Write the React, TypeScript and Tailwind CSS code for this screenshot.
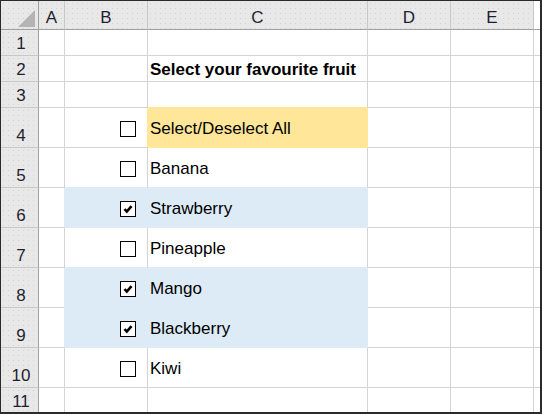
import { useState } from "react";

const COLS = ["A", "B", "C", "D", "E", ""];
const ROW_H = [26, 26, 26, 40, 40, 40, 40, 40, 40, 40, 26];

const YELLOW = "#ffe699";
const BLUE = "#ddebf7";
const GRID = "#d4d4d4";

const fruits = ["Banana", "Strawberry", "Pineapple", "Mango", "Blackberry", "Kiwi"];

const dots =
  "bg-[#e8e8e8] bg-[radial-gradient(circle,#d2d2d2_0.5px,transparent_0.7px)] bg-[length:5px_5px]";

function Box({ checked, onClick }: { checked: boolean; onClick: () => void }) {
  return (
    <button
      onClick={onClick}
      className="w-4 h-4 border border-black bg-white flex items-center justify-center"
    >
      {checked && (
        <svg width="14" height="14" viewBox="0 0 14 14">
          <path d="M3.5 7 L5.8 9.6 L10.5 4.2" fill="none" stroke="#000" strokeWidth="2.6" />
        </svg>
      )}
    </button>
  );
}

export default function App() {
  const [checked, setChecked] = useState([false, true, false, true, true, false]);
  const [all, setAll] = useState(false);

  const toggleAll = () => {
    const next = !all;
    setAll(next);
    setChecked(fruits.map(() => next));
  };

  const toggle = (i: number) => {
    setChecked(checked.map((v, j) => (j === i ? !v : v)));
  };

  // r: 1-based sheet row, c: 0 = A
  const fill = (r: number, c: number) => {
    if (r === 4 && c === 2) return YELLOW;
    if (r >= 5 && r <= 10 && (c === 1 || c === 2) && checked[r - 5]) return BLUE;
    return "";
  };

  const cellContent = (r: number, c: number) => {
    if (r === 2 && c === 2) return <span className="font-bold">Select your favourite fruit</span>;
    if (r === 4 && c === 1) return <Box checked={all} onClick={toggleAll} />;
    if (r === 4 && c === 2) return <span>Select/Deselect All</span>;
    if (r >= 5 && r <= 10) {
      const i = r - 5;
      if (c === 1) return <Box checked={checked[i]} onClick={() => toggle(i)} />;
      if (c === 2) return <span>{fruits[i]}</span>;
    }
    return null;
  };

  return (
    <div className="w-[542px] h-[414px] overflow-hidden bg-white border-l border-t border-r-2 border-b-2 border-[#2b2b2b] font-['Liberation_Sans',Arial,sans-serif] text-[17px] leading-[20px] text-black">
      <div className="grid grid-cols-[38px_26px_83px_220px_83px_83px_20px] grid-rows-[29px_26px_26px_26px_40px_40px_40px_40px_40px_40px_40px_26px]">
        {/* corner */}
        <div className={`${dots} border-r border-b border-[#a0a0a0] flex items-end justify-end pr-[3px] pb-[2px]`}>
          <svg width="17" height="17" viewBox="0 0 17 17">
            <polygon points="0,17 17,0 17,17" fill="#b4b4b4" />
          </svg>
        </div>
        {/* column headers */}
        {COLS.map((col, c) =>
          col ? (
            <div
              key={col}
              className={`${dots} border-r border-b border-r-[#c8c8c8] border-b-[#a0a0a0] flex items-end justify-center pb-[1.5px] text-[#1f1f2f]`}
            >
              {col}
            </div>
          ) : (
            <div key={c} className="bg-white border-b border-[#a0a0a0]" />
          )
        )}

        {ROW_H.map((_, idx) => {
          const r = idx + 1;
          return [
            <div
              key={`h${r}`}
              className={`${dots} border-r border-b border-r-[#a0a0a0] border-b-[#c8c8c8] flex items-end justify-center pl-[3px] pb-[1.5px] text-[#1f1f2f]`}
            >
              {r}
            </div>,
            ...COLS.map((_, c) => {
              const f = fill(r, c);
              const right = c === COLS.length - 1 ? "transparent" : f || fill(r, c + 1) || GRID;
              const bottom = f || fill(r + 1, c) || GRID;
              return (
                <div
                  key={`${r}-${c}`}
                  className={`border-r border-b flex items-center pt-[2px] ${
                    c === 1 ? "justify-end pr-[11px]" : "pl-[2px]"
                  }`}
                  style={{ backgroundColor: f || "#ffffff", borderRightColor: right, borderBottomColor: bottom }}
                >
                  {cellContent(r, c)}
                </div>
              );
            }),
          ];
        })}
      </div>
    </div>
  );
}
